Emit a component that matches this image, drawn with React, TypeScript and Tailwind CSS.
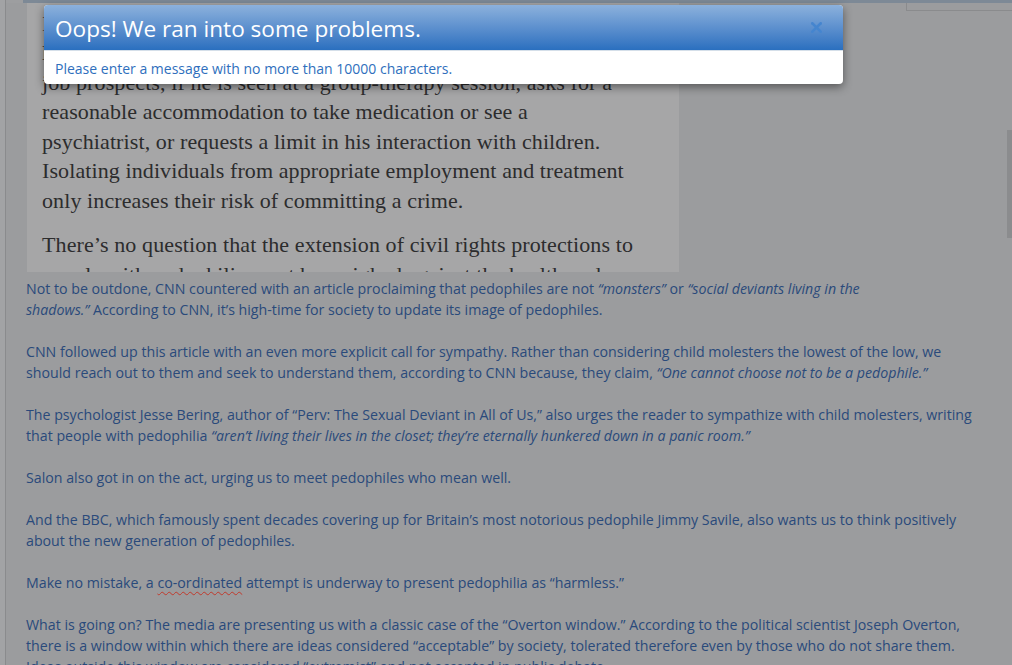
import { X } from "lucide-react";

const serif = { fontFamily: '"Liberation Serif", "DejaVu Serif", serif' };

const clipLines = [
  "Interventions are also problematic in that a person with pedophilia risks",
  "losing his job, his home and his family. He jeopardizes his employment and",
  "job prospects, if he is seen at a group-therapy session, asks for a",
  "reasonable accommodation to take medication or see a",
  "psychiatrist, or requests a limit in his interaction with children.",
  "Isolating individuals from appropriate employment and treatment",
  "only increases their risk of committing a crime.",
];

function ArticleClip() {
  return (
    <div
      className="ml-[27px] h-[269px] w-[652px] shrink-0 overflow-hidden whitespace-nowrap bg-[#a6a6a7] pl-[15px] pt-[5.5px] text-[22px] leading-[29.5px] tracking-[0.1px] text-[#2c2c2d]"
      style={serif}
    >
      {clipLines.map((l) => (
        <div key={l}>{l}</div>
      ))}
      <div className="mt-[15px]">There’s no question that the extension of civil rights protections to</div>
      <div>people with pedophilia must be weighed against the health and</div>
    </div>
  );
}

function Body() {
  return (
    <div className="mt-[6px] flex flex-col gap-[21px] whitespace-nowrap pl-[26px] text-[14.2px] leading-[21px] text-[#2a4a7b]">
      <p>
        Not to be outdone, CNN countered with an article proclaiming that pedophiles are not <i>“monsters”</i> or <i>“social deviants living in the</i>
        <br />
        <i>shadows.”</i> According to CNN, it’s high-time for society to update its image of pedophiles.
      </p>
      <p>
        CNN followed up this article with an even more explicit call for sympathy. Rather than considering child molesters the lowest of the low, we
        <br />
        should reach out to them and seek to understand them, according to CNN because, they claim, <i>“One cannot choose not to be a pedophile.”</i>
      </p>
      <p>
        The psychologist Jesse Bering, author of “Perv: The Sexual Deviant in All of Us,” also urges the reader to sympathize with child molesters, writing
        <br />
        that people with pedophilia <i>“aren’t living their lives in the closet; they’re eternally hunkered down in a panic room.”</i>
      </p>
      <p>Salon also got in on the act, urging us to meet pedophiles who mean well.</p>
      <p>
        And the BBC, which famously spent decades covering up for Britain’s most notorious pedophile Jimmy Savile, also wants us to think positively
        <br />
        about the new generation of pedophiles.
      </p>
      <p>
        Make no mistake, a{" "}
        <span className="underline decoration-[#c0392b] decoration-wavy decoration-1 underline-offset-[3px]">co-ordinated</span>{" "}
        attempt is underway to present pedophilia as “harmless.”
      </p>
      <p>
        What is going on? The media are presenting us with a classic case of the “Overton window.” According to the political scientist Joseph Overton,
        <br />
        there is a window within which there are ideas considered “acceptable” by society, tolerated therefore even by those who do not share them.
        <br />
        Ideas outside this window are considered “extremist” and not accepted in public debate.
      </p>
    </div>
  );
}

function ErrorModal() {
  return (
    <div className="absolute left-[44px] top-[5px] w-[799px] overflow-hidden rounded-[4px] bg-white shadow-[0_3px_10px_rgba(0,0,0,0.45)]">
      <div className="flex h-[46px] items-center justify-between border-b border-[#d5dfe9] bg-gradient-to-b from-[#8cb1dc] to-[#2a6fbf] pl-[11px] pr-[18px]">
        <h2 className="pt-[4px] text-[22.6px] leading-none text-white">Oops! We ran into some problems.</h2>
        <X className="h-[17px] w-[17px] text-[#4585cf]" strokeWidth={3.6} />
      </div>
      <div className="flex h-[33px] items-center pl-[11px] pt-[1px] text-[14px] text-[#2f6fbd]">
        Please enter a message with no more than 10000 characters.
      </div>
    </div>
  );
}

export default function App() {
  return (
    <div className="relative h-[665px] w-[1012px] overflow-hidden bg-[#9b9c9e]" style={{ fontFamily: '"Open Sans", "Noto Sans", sans-serif' }}>
      {/* dimmed editor chrome */}
      <div className="absolute left-0 top-0 h-full w-[5px] bg-[#a2a3a5]" />
      <div className="absolute left-[5px] top-0 h-full w-px bg-[#8a8b8d]" />
      <div className="flex h-full flex-col">
        <div className="flex h-[3px] shrink-0">
          <div className="w-[23px] bg-[#9d9ea0]" />
          <div className="flex-1 bg-[#7d8996]" />
        </div>
        <div className="relative flex min-h-0 flex-1 flex-col">
          <div className="absolute right-0 top-0 h-[8px] w-[106px] border-b border-l border-[#8a8b8d]" />
          <ArticleClip />
          <Body />
        </div>
      </div>
      <div className="absolute right-0 top-[130px] h-[108px] w-[5px] bg-[#8b8c8e]" />
      <ErrorModal />
    </div>
  );
}
